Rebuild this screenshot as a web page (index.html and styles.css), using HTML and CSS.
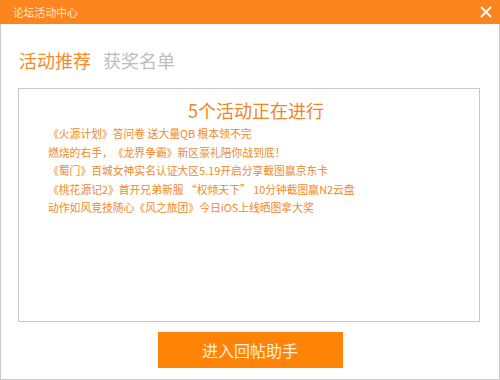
FILE: index.html
```html
<!DOCTYPE html>
<html lang="zh-CN">
<head>
  <meta charset="UTF-8" />
  <title>论坛活动中心</title>
  <link rel="stylesheet" href="styles.css">
</head>
<body>
  <div class="window">
    <div class="titlebar">
      <span class="title">论坛活动中心</span>
      <svg class="close-btn" width="12" height="12" viewBox="0 0 12 12">
        <path d="M1 1 L11 11 M11 1 L1 11" stroke="#fff" stroke-width="1.8" fill="none" />
      </svg>
    </div>

    <div class="content">
      <div class="tabs">
        <span class="tab active">活动推荐</span>
        <span class="tab">获奖名单</span>
      </div>

      <div class="panel">
        <h2>5个活动正在进行</h2>
        <ul class="events">
          <li>《火源计划》答问卷 送大量QB 根本领不完</li>
          <li>燃烧的右手，《龙界争霸》新区豪礼陪你战到底！</li>
          <li>《蜀门》百城女神实名认证大区5.19开启分享截图赢京东卡</li>
          <li>《桃花源记2》首开兄弟新服 “权倾天下” 10分钟截图赢N2云盘</li>
          <li>动作如风竞技随心《风之旅团》今日iOS上线晒图拿大奖</li>
        </ul>
      </div>

      <div class="actions">
        <button class="enter-btn">进入回帖助手</button>
      </div>
    </div>
  </div>
</body>
</html>
```

FILE: styles.css
```css
body {
  margin: 0;
  font-family: "Noto Sans CJK SC", "Noto Sans", sans-serif;
  background: white;
}
.window {
  width: 500px;
  height: 380px;
  box-sizing: border-box;
  border: 1px solid #c9c9c9;
  border-top: none;
  background: white;
}
.titlebar {
  height: 24px;
  margin: 0 -1px;
  background: #fd851d;
  display: flex;
  align-items: center;
  justify-content: space-between;
  padding: 0 8px 0 13px;
}
.title {
  color: #ffe9d4;
  font-size: 10.8px;
  line-height: 24px;
}
.close-btn {
  display: block;
}

.content {
  padding: 24px 19px 0 17px;
}
.tabs {
  display: flex;
  gap: 12px;
  padding-left: 1px;
}
.tab {
  font-size: 18px;
  line-height: 24px;
  color: #bdbdbd;
}
.tab.active {
  color: #f58a2e;
}

.panel {
  margin-top: 16px;
  height: 234px;
  box-sizing: border-box;
  border: 1px solid #c8c8c8;
  padding-top: 9px;
}
h2 {
  margin: 0;
  padding-left: 14px;
  text-align: center;
  font-size: 18px;
  font-weight: normal;
  line-height: 24px;
  color: #f38424;
}
.events {
  list-style: none;
  margin: 2px 0 0;
  padding: 0 0 0 29px;
  text-spacing-trim: space-all;
}
.events li {
  font-size: 10.8px;
  line-height: 18.5px;
  color: #f08a2c;
}

.actions {
  display: flex;
  justify-content: center;
  margin-top: 10px;
  padding-left: 2px;
}
.enter-btn {
  width: 185px;
  height: 36px;
  border: none;
  background: #ff8306;
  color: #ffeedd;
  font-family: inherit;
  font-size: 16px;
  cursor: pointer;
}
```
